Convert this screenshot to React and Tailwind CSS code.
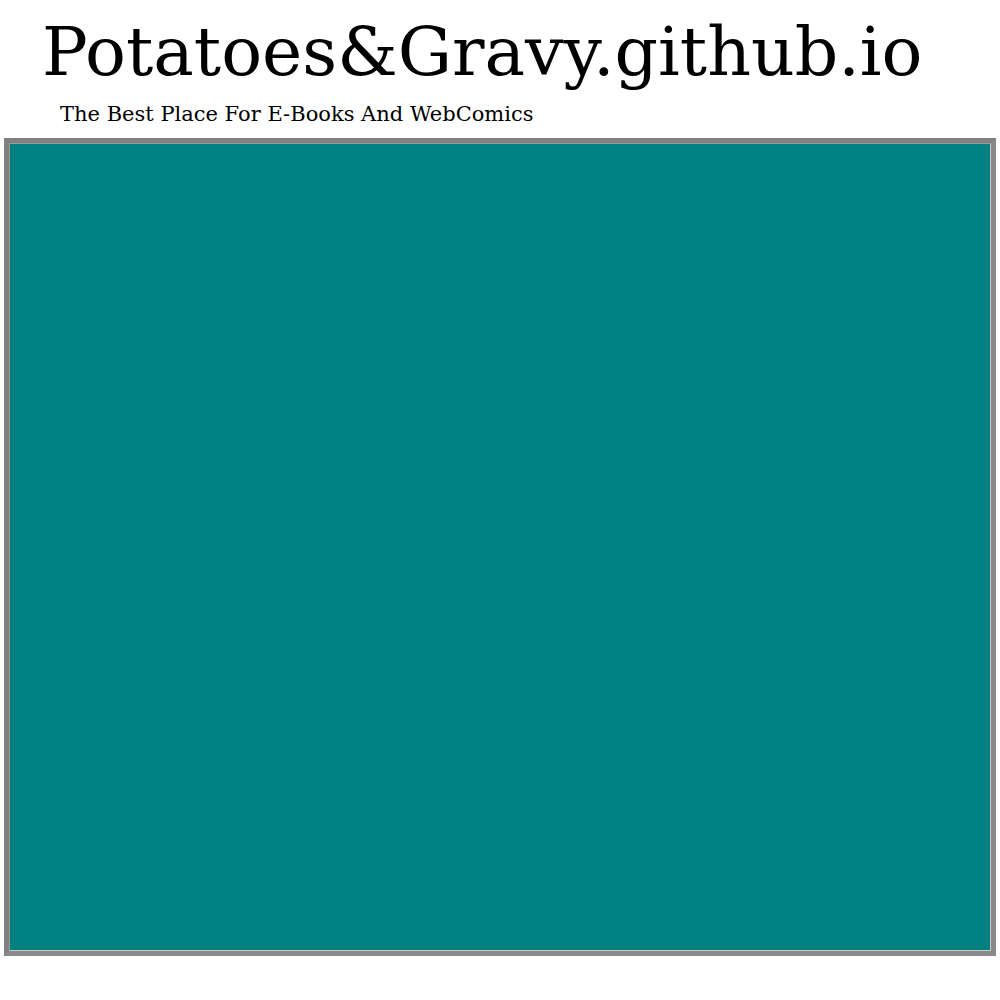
export default function App() {
  return (
    <div className="min-h-[1000px] bg-white font-['DejaVu_Serif',serif] text-black">
      <h1 className="pl-[42px] pt-[8px] text-[68px] leading-[88px]">Potatoes&amp;Gravy.github.io</h1>
      <p className="mt-[4px] pl-[60px] text-[21px] leading-[28px]">The Best Place For E-Books And WebComics</p>
      <div className="mx-[4px] mt-[10px] h-[818px] border-[5px] border-[#808080] border-b-[#8a8a8a] border-r-[#8a8a8a]">
        <div className="h-full border border-[#9a9a9a] border-b-[#c8c8c8] border-r-[#c8c8c8] bg-[#008080]" />
      </div>
    </div>
  );
}
